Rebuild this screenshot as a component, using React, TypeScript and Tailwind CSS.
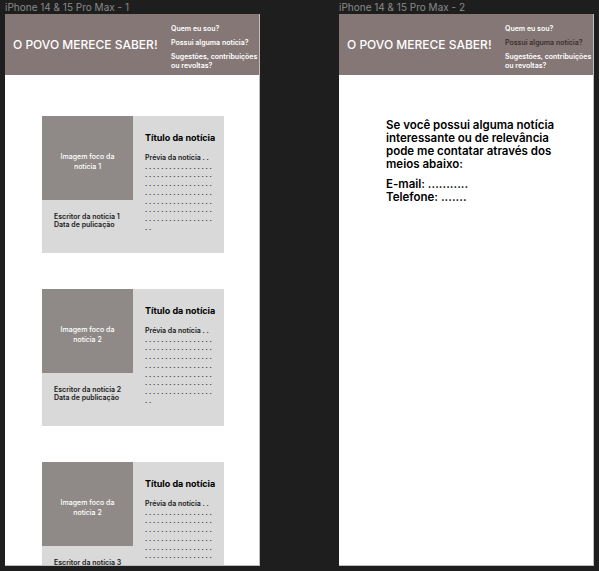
const font = { fontFamily: "Inter, 'Noto Sans', sans-serif" };

function Header({ active }: { active?: boolean }) {
  return (
    <div className="h-[61px] bg-[#857776] flex">
      <div className="w-[166px] flex items-center pl-[8px]">
        <span className="text-[12px] font-medium text-white whitespace-nowrap">
          O POVO MERECE SABER!
        </span>
      </div>
      <div className="flex flex-col gap-[5px] pt-[10px] text-[7px] leading-[9px] font-semibold text-white">
        <span>Quem eu sou?</span>
        <span className={active ? "text-[#3d2f2f]" : ""}>Possui alguma notícia?</span>
        <span>
          Sugestões, contribuições
          <br />
          ou revoltas?
        </span>
      </div>
    </div>
  );
}

const dots = ".................";

function Card({ n, img }: { n: number; img: number }) {
  return (
    <div className="w-[182px] h-[137px] bg-[#d9d9d9] flex shrink-0">
      <div className="w-[91px] flex flex-col">
        <div className="h-[84px] bg-[#8f8a88] flex items-center justify-center pt-[7px]">
          <span className="text-[7px] leading-[10px] text-white text-center font-medium">
            Imagem foco da
            <br />
            notícia {img}
          </span>
        </div>
        <div className="pl-[12px] pt-[13px] text-[7px] leading-[8px] font-semibold text-[#1a1a1a]">
          <div>Escritor da notícia {n}</div>
          {n < 3 && <div>Data de pu{n === 1 ? "" : "b"}licação</div>}
        </div>
      </div>
      <div className="flex-1 pl-[12px] pt-[16px]">
        <div className="text-[9px] leading-[11px] font-bold text-black">Título da notícia</div>
        <div className="mt-[11px] text-[7px] leading-[8.7px] font-semibold text-[#1a1a1a]">
          <div>Prévia da notícia . .</div>
          <div className="tracking-[1.8px]">
            {[0, 1, 2, 3, 4, 5, 6].map((i) => (
              <div key={i}>{dots}</div>
            ))}
            <div>..</div>
          </div>
        </div>
      </div>
    </div>
  );
}

function Frame({ label, children }: { label: string; children: React.ReactNode }) {
  return (
    <div className="flex flex-col w-[255px] shrink-0">
      <div className="h-[14px] text-[10px] leading-[14px] text-[#8a8a8a] whitespace-nowrap">
        {label}
      </div>
      <div className="h-[552px] bg-white overflow-hidden border-r border-b border-[#bdbdbd]">
        {children}
      </div>
    </div>
  );
}

export default function App() {
  return (
    <div
      className="w-[599px] h-[571px] bg-[#1e1e1e] overflow-hidden flex gap-[79px] pl-[5px]"
      style={font}
    >
      <Frame label="iPhone 14 & 15 Pro Max - 1">
        <Header />
        <div className="flex flex-col gap-[36px] pl-[37px] pt-[41px]">
          <Card n={1} img={1} />
          <Card n={2} img={2} />
          <Card n={3} img={2} />
        </div>
      </Frame>
      <Frame label="iPhone 14 & 15 Pro Max - 2">
        <Header active />
        <div className="pl-[47px] pt-[44px] text-[11.5px] leading-[13px] font-semibold text-black">
          <p>
            Se você possui alguma notícia
            <br />
            interessante ou de relevância
            <br />
            pode me contatar através dos
            <br />
            meios abaixo:
          </p>
          <p className="mt-[7px]">
            E-mail: ...........
            <br />
            Telefone: .......
          </p>
        </div>
      </Frame>
    </div>
  );
}
